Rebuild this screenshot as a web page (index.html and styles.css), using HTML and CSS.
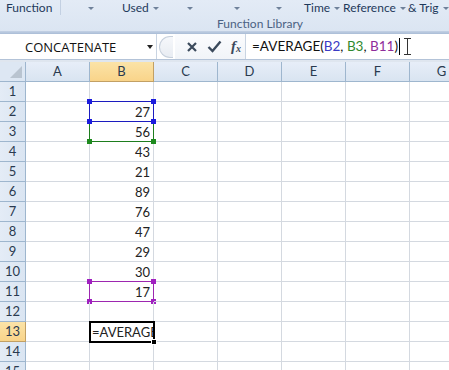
FILE: index.html
```html
<!DOCTYPE html>
<html lang="en">
<head>
  <meta charset="UTF-8">
  <title>Excel - AVERAGE</title>
  <link rel="stylesheet" href="styles.css">
</head>
<body>
  <!-- Ribbon: Function Library group -->
  <div class="ribbon">
    <div class="ribbon-row">
      <span class="rb">Function</span>
      <span class="rb"><i class="sep"></i></span>
      <span class="rb"><i class="dd"></i></span>
      <span class="rb">Used <i class="dd"></i></span>
      <span class="rb"><i class="dd"></i></span>
      <span class="rb"><i class="dd"></i></span>
      <span class="rb"><i class="dd"></i></span>
      <span class="rb">Time <i class="dd"></i></span>
      <span class="rb">Reference <i class="dd"></i></span>
      <span class="rb">&amp; Trig <i class="dd"></i></span>
    </div>
    <div class="group-label">Function Library</div>
  </div>
  <div class="band"></div>

  <!-- Formula bar -->
  <div class="fbar">
    <div class="namebox">
      <span>CONCATENATE</span>
      <i class="nb-arrow"></i>
    </div>
    <div class="grip"><i></i></div>
    <div class="fb-icons">
      <svg width="12" height="12" viewBox="0 0 12 12"><path d="M2 2 L10 10 M10 2 L2 10" stroke="#3b4a5c" stroke-width="2.2"/></svg>
      <svg width="15" height="13" viewBox="0 0 15 13"><path d="M1.5 7 L5.5 11 L13.5 1.5" stroke="#3b4a5c" stroke-width="2.4" fill="none"/></svg>
      <span class="fx">f<sub>x</sub></span>
    </div>
    <div class="formula">
      <span class="ftext">=AVERAGE(<span class="r1">B2</span>, <span class="r2">B3</span>, <span class="r3">B11</span>)</span><i class="caret"></i>
      <span class="ibeam"></span>
    </div>
  </div>
  <div class="gap"></div>

  <!-- Sheet -->
  <div class="sheet">
    <div class="corner"><i></i></div>
    <div class="ch">A</div><div class="ch sel">B</div><div class="ch">C</div><div class="ch">D</div><div class="ch">E</div><div class="ch">F</div><div class="ch">G</div>

    <div class="rh">1</div><div class="c"></div><div class="c"></div><div class="c"></div><div class="c"></div><div class="c"></div><div class="c"></div><div class="c"></div>

    <div class="rh">2</div><div class="c"></div>
    <div class="c num">27<span class="ref blue"><b class="tl"></b><b class="tr"></b><b class="bl"></b><b class="br"></b></span></div>
    <div class="c"></div><div class="c"></div><div class="c"></div><div class="c"></div><div class="c"></div>

    <div class="rh">3</div><div class="c"></div>
    <div class="c num">56<span class="ref green"><b class="bl"></b><b class="br"></b></span></div>
    <div class="c"></div><div class="c"></div><div class="c"></div><div class="c"></div><div class="c"></div>

    <div class="rh">4</div><div class="c"></div><div class="c num">43</div><div class="c"></div><div class="c"></div><div class="c"></div><div class="c"></div><div class="c"></div>
    <div class="rh">5</div><div class="c"></div><div class="c num">21</div><div class="c"></div><div class="c"></div><div class="c"></div><div class="c"></div><div class="c"></div>
    <div class="rh">6</div><div class="c"></div><div class="c num">89</div><div class="c"></div><div class="c"></div><div class="c"></div><div class="c"></div><div class="c"></div>
    <div class="rh">7</div><div class="c"></div><div class="c num">76</div><div class="c"></div><div class="c"></div><div class="c"></div><div class="c"></div><div class="c"></div>
    <div class="rh">8</div><div class="c"></div><div class="c num">47</div><div class="c"></div><div class="c"></div><div class="c"></div><div class="c"></div><div class="c"></div>
    <div class="rh">9</div><div class="c"></div><div class="c num">29</div><div class="c"></div><div class="c"></div><div class="c"></div><div class="c"></div><div class="c"></div>
    <div class="rh">10</div><div class="c"></div><div class="c num">30</div><div class="c"></div><div class="c"></div><div class="c"></div><div class="c"></div><div class="c"></div>

    <div class="rh">11</div><div class="c"></div>
    <div class="c num">17<span class="ref purple"><b class="tl"></b><b class="tr"></b><b class="bl"></b><b class="br"></b></span></div>
    <div class="c"></div><div class="c"></div><div class="c"></div><div class="c"></div><div class="c"></div>

    <div class="rh">12</div><div class="c"></div><div class="c"></div><div class="c"></div><div class="c"></div><div class="c"></div><div class="c"></div><div class="c"></div>

    <div class="rh sel">13</div><div class="c"></div>
    <div class="c active"><span class="edit">=AVERAGE(B2, B3, B11)</span><b class="handle"></b></div>
    <div class="c"></div><div class="c"></div><div class="c"></div><div class="c"></div><div class="c"></div>

    <div class="rh">14</div><div class="c"></div><div class="c"></div><div class="c"></div><div class="c"></div><div class="c"></div><div class="c"></div><div class="c"></div>
    <div class="rh">15</div><div class="c"></div><div class="c"></div><div class="c"></div><div class="c"></div><div class="c"></div><div class="c"></div><div class="c"></div>
  </div>
</body>
</html>
```

FILE: styles.css
```css
* {
  box-sizing: border-box;
}
body {
  margin: 0;
  width: 449px;
  height: 370px;
  overflow: hidden;
  background: #fff;
  font-family: "Open Sans", "Noto Sans", sans-serif;
}

/* ribbon */
.ribbon {
  height: 31px;
  background: linear-gradient(#e3ebf6, #dbe5f2);
  color: #1e395b;
  font-family: "Lato", sans-serif;
  font-size: 12px;
}
.ribbon-row {
  display: grid;
  grid-template-columns: 54px 27px 35px 64px 47px 42px 29px 39px 65px 41px;
  padding-left: 6px;
  height: 17px;
  line-height: 15px;
}
.rb {
  white-space: nowrap;
}
.dd {
  display: inline-block;
  width: 0;
  height: 0;
  border-left: 3px solid transparent;
  border-right: 3px solid transparent;
  border-top: 3px solid #6f819a;
  vertical-align: 2px;
  margin-left: 1px;
}
.sep {
  display: block;
  width: 1px;
  height: 15px;
  background: #c3d0e2;
}
.group-label {
  height: 14px;
  line-height: 13px;
  padding-left: 217px;
  color: #4b6283;
}
.band {
  height: 3px;
  background: linear-gradient(#c4d2e5, #a9bcd6);
}

/* formula bar */
.fbar {
  display: flex;
  height: 26px;
  background: #fff;
  border-bottom: 1px solid #b3c3d8;
}
.namebox {
  width: 157px;
  display: flex;
  align-items: center;
  padding-left: 25px;
  font-size: 13px;
  color: #111;
  border-right: 1px solid #c9d4e2;
}
.namebox span {
  flex: 1;
}
.nb-arrow {
  width: 0;
  height: 0;
  border-left: 3px solid transparent;
  border-right: 3px solid transparent;
  border-top: 4px solid #222;
  margin-right: 3px;
}
.grip {
  width: 18px;
  display: flex;
  align-items: center;
  justify-content: center;
}
.grip i {
  width: 14px;
  height: 22px;
  border: 1px solid #c7d0dc;
  border-right: none;
  border-radius: 11px 0 0 11px;
  background: linear-gradient(#f6f8fb, #e8ecf2);
}
.fb-icons {
  width: 71px;
  display: flex;
  align-items: center;
  gap: 9px;
  padding-left: 11px;
  border-right: 1px solid #c9d4e2;
  background: linear-gradient(#fbfcfe, #f1f4f8);
}
.fx {
  font-family: "Liberation Serif", serif;
  font-style: italic;
  font-weight: bold;
  font-size: 15px;
  color: #3b4a5c;
  line-height: 1;
}
.fx sub {
  font-size: 10px;
  vertical-align: -1px;
}
.formula {
  flex: 1;
  padding-left: 6px;
  font-family: "Lato", sans-serif;
  font-size: 13.5px;
  line-height: 25px;
  color: #111;
  white-space: nowrap;
  position: relative;
}
.r1 { color: #3a3ac4; }
.r2 { color: #2f8a2f; }
.r3 { color: #8e2c9a; }
.caret {
  display: inline-block;
  width: 1px;
  height: 17px;
  background: #000;
  margin-left: 1px;
  vertical-align: -4px;
}
.ibeam {
  position: absolute;
  left: 158px;
  top: 4px;
  width: 7px;
  height: 17px;
  border-top: 1px solid #333;
  border-bottom: 1px solid #333;
  background: linear-gradient(#333, #333) center / 1px 100% no-repeat;
}
.gap {
  height: 2px;
  background: #dfe6ef;
}

/* sheet */
.sheet {
  display: grid;
  grid-template-columns: 26px repeat(7, 64px);
  grid-auto-rows: 20px;
  font-family: "Lato", sans-serif;
  font-size: 13px;
  color: #222;
}
.corner {
  background: #dde7f3;
  border-right: 1px solid #9eb6ce;
  border-bottom: 1px solid #9eb6ce;
  position: relative;
}
.corner i {
  position: absolute;
  right: 3px;
  bottom: 3px;
  width: 0;
  height: 0;
  border-left: 12px solid transparent;
  border-bottom: 12px solid #b9c4d0;
}
.ch {
  background: linear-gradient(#e7eef8, #d9e4f1);
  border-right: 1px solid #9eb6ce;
  border-bottom: 1px solid #9eb6ce;
  text-align: center;
  line-height: 19px;
  color: #2a3a4f;
}
.rh {
  background: linear-gradient(90deg, #e4ecf6, #dae5f2);
  border-right: 1px solid #9eb6ce;
  border-bottom: 1px solid #9eb6ce;
  text-align: center;
  line-height: 19px;
  color: #2a3a4f;
}
.ch.sel, .rh.sel {
  background: linear-gradient(#fbe3a7, #f9d48a);
  border-color: #c2a064;
}
.c {
  border-right: 1px solid #d4d9e0;
  border-bottom: 1px solid #d4d9e0;
  position: relative;
  line-height: 21px;
}
.num {
  text-align: right;
  padding-right: 3px;
}
.ref {
  position: absolute;
  left: -1px;
  top: -1px;
  right: -1px;
  bottom: -1px;
  border: 1px solid;
}
.ref b {
  position: absolute;
  width: 5px;
  height: 5px;
}
.ref .tl { left: -3px; top: -3px; }
.ref .tr { right: -3px; top: -3px; }
.ref .bl { left: -3px; bottom: -3px; }
.ref .br { right: -3px; bottom: -3px; }
.blue { border-color: #1c1cbf; z-index: 2; }
.blue b { background: #1c1cdd; }
.green { border-color: #1e7d1e; z-index: 1; }
.green b { background: #1e8a1e; }
.purple { border-color: #9d27b0; }
.purple b { background: #a020c0; }
.active {
  border: none;
  outline: 2px solid #000;
  outline-offset: -1px;
  z-index: 3;
  background: #fff;
}
.edit {
  display: block;
  overflow: hidden;
  white-space: nowrap;
  padding-left: 2px;
  height: 20px;
}
.handle {
  position: absolute;
  right: -3px;
  bottom: -3px;
  width: 6px;
  height: 6px;
  background: #000;
  border: 1px solid #fff;
}
```
